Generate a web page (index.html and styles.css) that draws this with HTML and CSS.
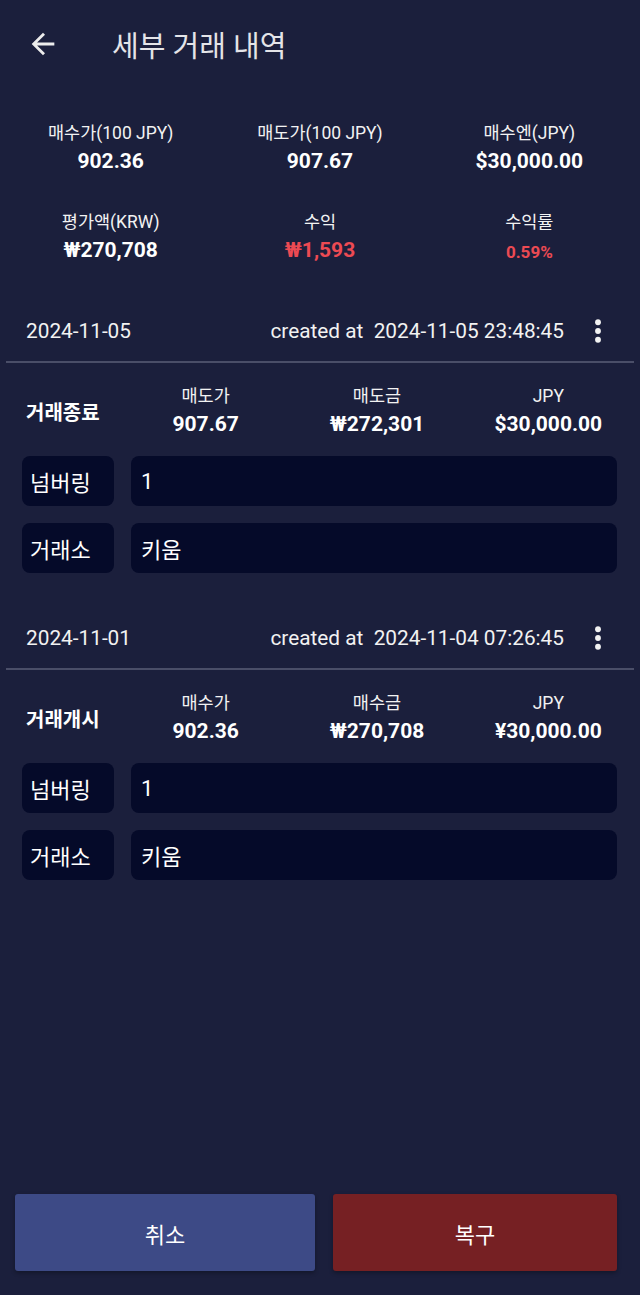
FILE: index.html
```html
<!DOCTYPE html>
<html lang="ko">
<head>
    <meta charset="UTF-8">
    <meta name="viewport" content="width=device-width, initial-scale=1.0">
    <title>세부 거래 내역</title>
    <link rel="stylesheet" href="styles.css">
</head>
<body>
    <div class="page">
        <div class="topbar">
            <svg class="back" viewBox="0 0 24 24" width="34" height="34">
                <path d="M20 11H7.83l5.59-5.59L12 4l-8 8 8 8 1.41-1.41L7.83 13H20v-2z" fill="currentColor"/>
            </svg>
            <h1 class="title">세부 거래 내역</h1>
        </div>

        <div class="summary">
            <div class="stat">
                <span class="label">매수가(100 JPY)</span>
                <span class="value">902.36</span>
            </div>
            <div class="stat">
                <span class="label">매도가(100 JPY)</span>
                <span class="value">907.67</span>
            </div>
            <div class="stat">
                <span class="label">매수엔(JPY)</span>
                <span class="value">$30,000.00</span>
            </div>
            <div class="stat">
                <span class="label">평가액(KRW)</span>
                <span class="value">₩270,708</span>
            </div>
            <div class="stat">
                <span class="label">수익</span>
                <span class="value red">₩1,593</span>
            </div>
            <div class="stat">
                <span class="label">수익률</span>
                <span class="value red small">0.59%</span>
            </div>
        </div>

        <div class="record">
            <div class="record-head">
                <span class="date">2024-11-05</span>
                <span class="created">created at&nbsp; 2024-11-05 23:48:45</span>
                <svg class="more" viewBox="0 0 24 24" width="28" height="28">
                    <circle cx="12" cy="4.5" r="2.5" fill="currentColor"/>
                    <circle cx="12" cy="12" r="2.5" fill="currentColor"/>
                    <circle cx="12" cy="19.5" r="2.5" fill="currentColor"/>
                </svg>
            </div>
            <div class="detail">
                <span class="kind">거래종료</span>
                <div class="stat">
                    <span class="label">매도가</span>
                    <span class="value">907.67</span>
                </div>
                <div class="stat">
                    <span class="label">매도금</span>
                    <span class="value">₩272,301</span>
                </div>
                <div class="stat">
                    <span class="label">JPY</span>
                    <span class="value">$30,000.00</span>
                </div>
            </div>
            <div class="field">
                <div class="field-name">넘버링</div>
                <div class="field-value">1</div>
            </div>
            <div class="field">
                <div class="field-name">거래소</div>
                <div class="field-value">키움</div>
            </div>
        </div>

        <div class="record">
            <div class="record-head">
                <span class="date">2024-11-01</span>
                <span class="created">created at&nbsp; 2024-11-04 07:26:45</span>
                <svg class="more" viewBox="0 0 24 24" width="28" height="28">
                    <circle cx="12" cy="4.5" r="2.5" fill="currentColor"/>
                    <circle cx="12" cy="12" r="2.5" fill="currentColor"/>
                    <circle cx="12" cy="19.5" r="2.5" fill="currentColor"/>
                </svg>
            </div>
            <div class="detail">
                <span class="kind">거래개시</span>
                <div class="stat">
                    <span class="label">매수가</span>
                    <span class="value">902.36</span>
                </div>
                <div class="stat">
                    <span class="label">매수금</span>
                    <span class="value">₩270,708</span>
                </div>
                <div class="stat">
                    <span class="label">JPY</span>
                    <span class="value">¥30,000.00</span>
                </div>
            </div>
            <div class="field">
                <div class="field-name">넘버링</div>
                <div class="field-value">1</div>
            </div>
            <div class="field">
                <div class="field-name">거래소</div>
                <div class="field-value">키움</div>
            </div>
        </div>

        <div class="actions">
            <button class="btn btn-cancel">취소</button>
            <button class="btn btn-restore">복구</button>
        </div>
    </div>
</body>
</html>
```

FILE: styles.css
```css
body {
    margin: 0;
    background-color: #1b1f3c;
    color: #ffffff;
    font-family: Roboto, "Noto Sans CJK KR", sans-serif;
}
.page {
    display: flex;
    flex-direction: column;
    min-height: 100vh;
    padding: 0 6px;
    box-sizing: border-box;
}
.topbar {
    display: flex;
    align-items: center;
    height: 88px;
    padding-left: 20px;
}
.back {
    color: #ececec;
}
.title {
    margin: 0 0 0 52px;
    font-size: 29px;
    font-weight: 400;
    color: #e4e4e8;
}
.summary {
    display: grid;
    grid-template-columns: repeat(3, 1fr);
    row-gap: 36px;
    margin-top: 34px;
}
.stat {
    display: flex;
    flex-direction: column;
    align-items: center;
}
.label {
    font-size: 17.5px;
    line-height: 22px;
    color: #f2f2f2;
}
.value {
    font-size: 21px;
    font-weight: 700;
    line-height: 28px;
}
.red {
    color: #ec4a53;
}
.small {
    font-size: 17px;
}
.record {
    margin-top: 34px;
}
.summary + .record {
    margin-top: 34px;
}
.record-head {
    display: flex;
    align-items: center;
    height: 61px;
    padding: 0 22px 0 20px;
    border-bottom: 2px solid #4a4e68;
    font-size: 20.8px;
    color: #f2f2f2;
}
.date {
    flex: 1;
}
.more {
    margin-left: 20px;
    color: #f2f2f2;
}
.detail {
    display: grid;
    grid-template-columns: 114px repeat(3, 1fr);
    align-items: center;
    margin-top: 22px;
}
.kind {
    padding-left: 20px;
    font-size: 20px;
    font-weight: 700;
}
.label + .value {
    margin-top: 3px;
}
.label + .small {
    margin-top: 5px;
}
.field {
    display: flex;
    gap: 17px;
    margin: 17px 17px 0 16px;
}
.detail + .field {
    margin-top: 18px;
}
.field-name,
.field-value {
    display: flex;
    align-items: center;
    height: 50px;
    border-radius: 8px;
    background-color: #050a29;
    font-size: 22px;
}
.field-name {
    width: 92px;
    padding-left: 8px;
    box-sizing: border-box;
}
.field-value {
    flex: 1;
    padding-left: 10px;
}
.actions {
    display: flex;
    gap: 18px;
    margin: auto 17px 24px 9px;
}
.btn {
    height: 77px;
    border: none;
    border-radius: 3px;
    color: #ffffff;
    font-family: Roboto, "Noto Sans CJK KR", sans-serif;
    font-size: 22px;
    box-shadow: 0 2px 4px rgba(0, 0, 0, 0.3);
}
.btn-cancel {
    width: 300px;
    background-color: #3d4a86;
}
.btn-restore {
    flex: 1;
    background-color: #762023;
}
```
